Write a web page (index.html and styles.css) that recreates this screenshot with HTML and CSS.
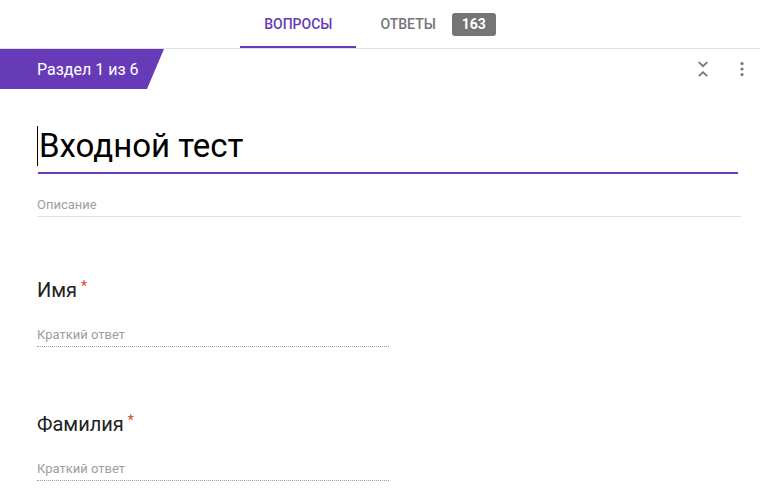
FILE: index.html
```html
<!DOCTYPE html>
<html lang="ru">
<head>
<meta charset="utf-8">
<link rel="stylesheet" href="styles.css">
</head>
<body>
<header class="tabs">
  <div class="tab active">ВОПРОСЫ</div>
  <div class="tab">ОТВЕТЫ <span class="badge">163</span></div>
</header>
<div class="section-bar">
  <div class="section-label">Раздел 1 из 6</div>
  <div class="section-tools">
    <svg class="icon" viewBox="0 0 24 24" width="24" height="24"><path fill="none" stroke="#757575" stroke-width="1.8" d="M7.8 5.2L12 9.2 16.2 5.2M7.8 19.2L12 15.2 16.2 19.2"/></svg>
    <svg class="icon" viewBox="0 0 24 24" width="24" height="24"><circle cx="12" cy="6.5" r="1.6" fill="#757575"/><circle cx="12" cy="12" r="1.6" fill="#757575"/><circle cx="12" cy="17.5" r="1.6" fill="#757575"/></svg>
  </div>
</div>
<main class="form">
  <div class="title-field"><span class="caret"></span>Входной тест</div>
  <div class="desc-field">Описание</div>
  <section class="question">
    <div class="q-title">Имя<span class="req">*</span></div>
    <div class="answer">Краткий ответ</div>
  </section>
  <section class="question">
    <div class="q-title">Фамилия<span class="req">*</span></div>
    <div class="answer">Краткий ответ</div>
  </section>
</main>
</body>
</html>
```
FILE: styles.css
```css
* { box-sizing: border-box; }
html, body { margin: 0; padding: 0; background: #fff; }
body { font-family: Roboto, "Noto Sans", Arial, sans-serif; color: #202124; width: 760px; height: 503px; overflow: hidden; }

.tabs {
  display: flex;
  justify-content: center;
  height: 49px;
  border-bottom: 1px solid #e0e0e0;
}
.tab {
  display: flex;
  align-items: center;
  padding: 0 24px;
  height: 48px;
  font-size: 14px;
  font-weight: 500;
  color: #757575;
  border-bottom: 2px solid transparent;
  padding-top: 2px;
}
.tab.active { color: #673ab7; border-bottom-color: #673ab7; }
.badge {
  display: inline-flex;
  align-items: center;
  justify-content: center;
  margin-left: 16px;
  width: 44px;
  height: 23px;
  background: #757575;
  color: #fff;
  border-radius: 3px;
  font-size: 14px;
  font-weight: 700;
}

.section-bar {
  display: flex;
  justify-content: space-between;
  align-items: center;
  height: 40px;
}
.section-label {
  height: 40px;
  width: 164px;
  display: flex;
  align-items: center;
  padding-left: 37px;
  background: #673ab7;
  color: #fff;
  font-size: 16px;
  clip-path: polygon(0 0, 164px 0, 147px 100%, 0 100%);
}
.section-tools { display: flex; align-items: center; gap: 15px; padding-right: 6px; }
.icon { display: block; }

.form { padding: 0 19px 0 37px; }
.title-field {
  margin-top: 34px;
  height: 51px;
  display: flex;
  align-items: center;
  font-size: 33px;
  color: #000;
  border-bottom: 2px solid #673ab7;
  margin-right: 3px;
  margin-left: 1px;
  padding-bottom: 4px;
}
.caret {
  display: inline-block;
  width: 1px;
  height: 40px;
  background: #000;
  margin-left: -1px;
  margin-right: 1px;
}
.desc-field {
  margin-top: 23px;
  height: 20px;
  font-size: 13px;
  color: #9e9e9e;
  border-bottom: 1px solid #e0e0e0;
}
.question { padding-top: 57px; }
.question + .question { padding-top: 61px; }
.q-title { font-size: 20px; color: #212121; line-height: 24px; }
.req { color: #db4437; font-size: 14px; margin-left: 4px; vertical-align: 6px; }
.answer {
  margin-top: 25px;
  width: 352px;
  font-size: 13px;
  color: #9e9e9e;
  padding-bottom: 4px;
  border-bottom: 1px dotted #9e9e9e;
}
```
